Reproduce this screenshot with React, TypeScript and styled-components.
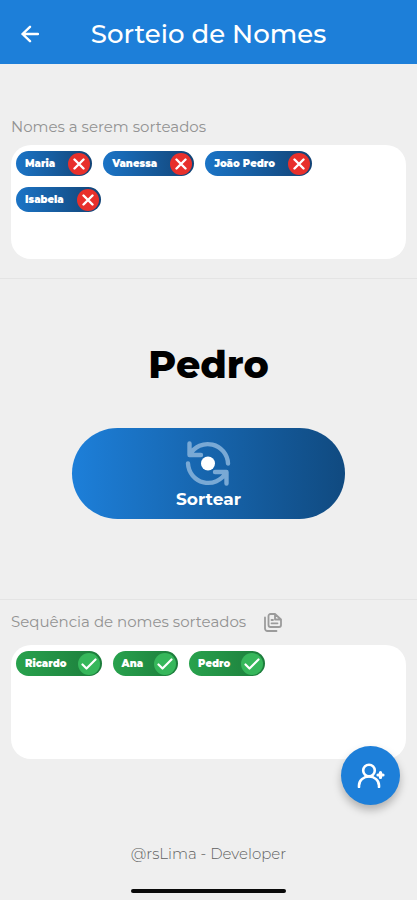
import React from "react";
import styled, { createGlobalStyle, css } from "styled-components";

const GlobalStyle = createGlobalStyle`
  *, *::before, *::after { box-sizing: border-box; }
  body {
    margin: 0;
    background: #efefef;
    font-family: Montserrat, Inter, "Open Sans", sans-serif;
  }
  button { font: inherit; border: 0; padding: 0; cursor: pointer; }
  h1, h2, p, ul { margin: 0; padding: 0; }
`;

const Screen = styled.div`
  position: relative;
  display: flex;
  flex-direction: column;
  min-height: 100vh;
  background: #efefef;
`;

const Header = styled.header`
  display: grid;
  grid-template-columns: 44px 1fr 44px;
  align-items: center;
  height: 64px;
  padding: 4px 8px 0;
  background: #1d7fd9;
  color: #fff;
`;

const BackButton = styled.button`
  display: grid;
  place-items: center;
  height: 44px;
  background: none;
  color: inherit;
`;

const Title = styled.h1`
  font-size: 26px;
  line-height: 36px;
  font-weight: 500;
  text-align: center;
  white-space: nowrap;
`;

const Section = styled.section<{ $roomy?: boolean }>`
  padding: ${(p) => (p.$roomy ? "52px 11px 19px" : "11px 11px 0")};
`;

const SectionHead = styled.div<{ $gap: number }>`
  display: flex;
  align-items: center;
  gap: 18px;
  height: 22px;
  margin-bottom: ${(p) => p.$gap}px;
`;

const Label = styled.h2`
  font-size: 15px;
  line-height: 22px;
  font-weight: 400;
  color: #939393;
  white-space: nowrap;
`;

const CopyButton = styled.button`
  display: flex;
  background: none;
  color: #9b9b9b;
`;

const NameBox = styled.ul`
  display: flex;
  flex-wrap: wrap;
  align-content: flex-start;
  gap: 11px;
  min-height: 114px;
  padding: 6px 5px;
  border-radius: 20px;
  background: #fff;
  list-style: none;
`;

const Chip = styled.li<{ $drawn?: boolean }>`
  display: flex;
  align-items: center;
  gap: ${(p) => (p.$drawn ? 11 : 13)}px;
  height: 25px;
  padding: 0 2px 0 9px;
  border-radius: 13px;
  color: #fff;
  font-size: 10px;
  line-height: 16px;
  font-weight: 900;
  ${(p) =>
    p.$drawn
      ? css`
          background: linear-gradient(90deg, #28a24d, #1c7c3b);
        `
      : css`
          background: linear-gradient(90deg, #1b74c6, #124375);
        `}
`;

const RemoveButton = styled.button`
  display: grid;
  place-items: center;
  width: 22px;
  height: 22px;
  border-radius: 50%;
  background: #e8302b;
  color: #fff;
`;

const DrawnMark = styled.span`
  display: grid;
  place-items: center;
  width: 22px;
  height: 22px;
  border-radius: 50%;
  background: #36b75b;
`;

const Stage = styled.main`
  flex: 1;
  display: flex;
  flex-direction: column;
  align-items: center;
  padding: 62px 24px 79px;
  border: solid #e4e4e4;
  border-width: 1px 0;
`;

const Winner = styled.p`
  margin-bottom: 39px;
  color: #000;
  font-size: 38px;
  line-height: 48px;
  font-weight: 800;
`;

const DrawButton = styled.button`
  display: flex;
  flex-direction: column;
  align-items: center;
  width: 74%;
  padding: 12px 0 8px;
  border-radius: 46px;
  background: linear-gradient(90deg, #1d7fd9, #104a80);
  color: #fff;

  span {
    font-size: 17px;
    line-height: 24px;
    font-weight: 700;
  }
`;

const Footer = styled.footer`
  display: flex;
  flex-direction: column;
  align-items: center;
  gap: 24px;
  padding: 84px 0 7px;
  color: #606060;
  font-size: 15px;
  line-height: 22px;
  font-weight: 300;
`;

const HomeBar = styled.div`
  width: 37%;
  height: 4px;
  border-radius: 2px;
  background: #0a0a0a;
`;

const AddButton = styled.button`
  position: absolute;
  right: 17px;
  bottom: 95px;
  display: grid;
  place-items: center;
  width: 59px;
  height: 59px;
  border-radius: 50%;
  background: #1d7fd9;
  color: #fff;
  box-shadow: 0 5px 8px rgba(0, 0, 0, 0.26);
`;

const pending = ["Maria", "Vanessa", "João Pedro", "Isabela"];
const drawn = ["Ricardo", "Ana", "Pedro"];

const stroke = {
  fill: "none",
  stroke: "currentColor",
  strokeLinecap: "round",
  strokeLinejoin: "round",
} as const;

const BackIcon = () => (
  <svg width="18" height="18" viewBox="0 0 18 18" {...stroke} strokeWidth="2.4">
    <path d="M17 9H1.5M9 1.8 1.5 9 9 16.2" />
  </svg>
);

const CrossIcon = () => (
  <svg width="12" height="12" viewBox="0 0 12 12" {...stroke} strokeWidth="2.4">
    <path d="m1.5 1.5 9 9M10.5 1.5l-9 9" />
  </svg>
);

const CheckIcon = () => (
  <svg width="16" height="12" viewBox="0 0 16 12" {...stroke} strokeWidth="2.2">
    <path d="m1.5 6.5 4 4 9-9" />
  </svg>
);

const CopyIcon = () => (
  <svg width="18" height="19" viewBox="0 0 18 19" {...stroke} strokeWidth="1.8">
    <path d="M11 1H6.5a2 2 0 0 0-2 2v9a2 2 0 0 0 2 2H15a2 2 0 0 0 2-2V6.5ZM11 1v5.5H17" />
    <path d="M7.5 7H9M7.5 10.3h6M1 4.5v11A2.5 2.5 0 0 0 3.5 18h9" />
  </svg>
);

const DrawIcon = () => (
  <svg width="46" height="47" viewBox="0 0 46 47" {...stroke}>
    <g stroke="#79a9d5" strokeWidth="4.4">
      <path d="M4.5 3.5V15H16M5 14.5A20.3 20.3 0 0 1 43 23.5" />
      <path d="M41.5 43.5V32H30M41 32.5A20.3 20.3 0 0 1 3 23.5" />
    </g>
    <circle cx="23" cy="23.5" r="7" fill="#fff" stroke="none" />
  </svg>
);

const AddPersonIcon = () => (
  <svg width="28" height="25" viewBox="0 0 28 25" {...stroke} strokeWidth="2.6">
    <circle cx="12" cy="7.5" r="5.8" />
    <path d="M2 24v-1.5a10 9 0 0 1 20 0V24" />
    <path d="M23.5 9.5v5M21 12h5" strokeWidth="3.2" />
  </svg>
);

export default function App() {
  return (
    <>
      <GlobalStyle />
      <Screen>
        <Header>
          <BackButton type="button" aria-label="Voltar">
            <BackIcon />
          </BackButton>
          <Title>Sorteio de Nomes</Title>
        </Header>

        <Section $roomy aria-labelledby="pending-label">
          <SectionHead $gap={7}>
            <Label id="pending-label">Nomes a serem sorteados</Label>
          </SectionHead>
          <NameBox>
            {pending.map((name) => (
              <Chip key={name}>
                {name}
                <RemoveButton type="button" aria-label={`Remover ${name}`}>
                  <CrossIcon />
                </RemoveButton>
              </Chip>
            ))}
          </NameBox>
        </Section>

        <Stage>
          <Winner>Pedro</Winner>
          <DrawButton type="button">
            <DrawIcon />
            <span>Sortear</span>
          </DrawButton>
        </Stage>

        <Section aria-labelledby="drawn-label">
          <SectionHead $gap={12}>
            <Label id="drawn-label">Sequência de nomes sorteados</Label>
            <CopyButton type="button" aria-label="Copiar">
              <CopyIcon />
            </CopyButton>
          </SectionHead>
          <NameBox>
            {drawn.map((name) => (
              <Chip key={name} $drawn>
                {name}
                <DrawnMark>
                  <CheckIcon />
                </DrawnMark>
              </Chip>
            ))}
          </NameBox>
        </Section>

        <Footer>
          <p>@rsLima - Developer</p>
          <HomeBar />
        </Footer>

        <AddButton type="button" aria-label="Adicionar nome">
          <AddPersonIcon />
        </AddButton>
      </Screen>
    </>
  );
}
